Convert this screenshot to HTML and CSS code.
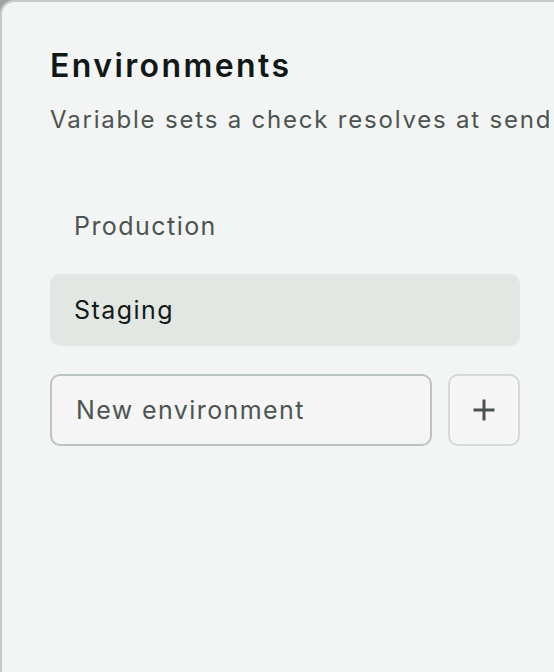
FILE: index.html
```html
<!DOCTYPE html>
<html lang="en">
  <head>
    <meta charset="UTF-8" />
    <meta name="viewport" content="width=device-width, initial-scale=1.0" />
    <title>Environments</title>
    <link rel="stylesheet" href="styles.css">
  </head>
  <body>
    <section class="panel">
      <h2 class="panel-title">Environments</h2>
      <p class="panel-lead">Variable sets a check resolves at send</p>

      <ul class="env-list">
        <li class="env-list-item">Production</li>
        <li class="env-list-item is-active">Staging</li>
      </ul>

      <form class="env-form">
        <input class="env-input" type="text" placeholder="New environment" />
        <button class="env-add" type="button" aria-label="Add environment">
          <svg width="24" height="24" viewBox="0 0 24 24" fill="none" stroke="currentColor" stroke-width="3">
            <path d="M12 1.5v21M1.5 12h21" />
          </svg>
        </button>
      </form>
    </section>
  </body>
</html>
```

FILE: styles.css
```css
* {
  padding: 0;
  margin: 0;
  box-sizing: border-box;
}

body {
  font-family: Inter, "Noto Sans", sans-serif;
  color: #111816;
  background-color: #a0a4a2;
  overflow: hidden;
}

ul {
  list-style: none;
}

.panel {
  width: 554px;
  height: 672px;
  padding: 44px 0 44px 48px;
  background: #f3f5f4;
  border-top: 2px solid #c3cac7;
  border-left: 2px solid #c3cac7;
  border-top-left-radius: 14px;
}

.panel-title {
  font-size: 32px;
  font-weight: 600;
  line-height: 40px;
  letter-spacing: 2.4px;
  margin-bottom: 18px;
}

.panel-lead {
  font-size: 24px;
  line-height: 32px;
  letter-spacing: 1.8px;
  color: #4b5450;
  white-space: nowrap;
}

.env-list {
  display: flex;
  flex-direction: column;
  gap: 12px;
  width: 470px;
  margin-top: 54px;
}

.env-list-item {
  display: flex;
  align-items: center;
  height: 72px;
  padding: 0 24px;
  font-size: 25px;
  letter-spacing: 1.45px;
  color: #4b5450;
  border-radius: 10px;
}

.env-list-item.is-active {
  color: #141a18;
  background: #e3e7e4;
}

.env-form {
  display: flex;
  gap: 16px;
  width: 470px;
  margin-top: 28px;
}

.env-input {
  flex: 1;
  min-width: 0;
  height: 72px;
  padding: 0 24px;
  font-family: inherit;
  font-size: 25px;
  letter-spacing: 1.4px;
  color: #141a18;
  background: #f4f5f4;
  border: 2px solid #bcc4c1;
  border-radius: 10px;
  outline: none;
}

.env-input::placeholder {
  color: #4d5551;
}

.env-add {
  display: flex;
  align-items: center;
  justify-content: center;
  flex: none;
  width: 72px;
  height: 72px;
  color: #4a524e;
  background: #f4f5f4;
  border: 2px solid #d4dad7;
  border-radius: 10px;
}
```
